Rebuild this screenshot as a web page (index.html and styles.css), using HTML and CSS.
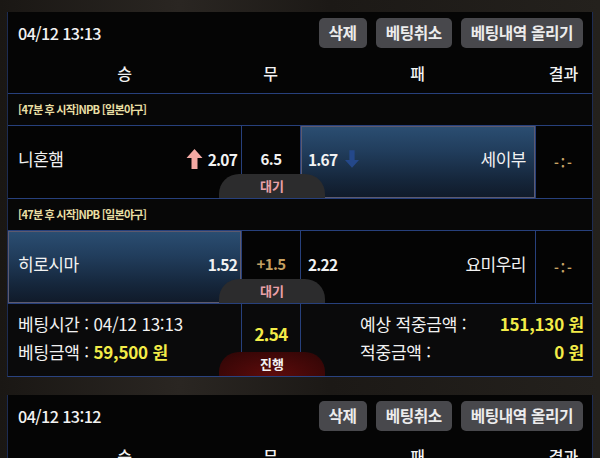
FILE: index.html
```html
<!DOCTYPE html>
<html lang="ko">
<head>
<meta charset="utf-8">
<title>베팅내역</title>
<link rel="stylesheet" href="styles.css">
</head>
<body>
<div class="page">
  <section class="slip">
    <div class="slip-top">
      <span class="date">04/12 13:13</span>
      <div class="actions">
        <button class="btn">삭제</button>
        <button class="btn">베팅취소</button>
        <button class="btn">베팅내역 올리기</button>
      </div>
    </div>
    <div class="cols"><span>승</span><span>무</span><span>패</span><span>결과</span></div>

    <div class="league">[47분 후 시작]NPB [일본야구]</div>
    <div class="match">
      <div class="cell home">
        <span class="team">니혼햄</span>
        <span class="odd"><svg class="arrow" viewBox="0 0 16 20" width="17" height="20"><polygon points="8,0 16,9 11,9 11,20 5,20 5,9 0,9" fill="#f4aaa4"/></svg>2.07</span>
      </div>
      <div class="cell draw"><span class="dval">6.5</span><span class="tab">대기</span></div>
      <div class="cell away sel">
        <span class="odd">1.67<svg class="arrow down" viewBox="0 0 16 20" width="14" height="20"><polygon points="8,20 16,11 11,11 11,0 5,0 5,11 0,11" fill="#24488a"/></svg></span>
        <span class="team">세이부</span>
      </div>
      <div class="cell result">-:-</div>
    </div>

    <div class="league">[47분 후 시작]NPB [일본야구]</div>
    <div class="match">
      <div class="cell home sel">
        <span class="team">히로시마</span>
        <span class="odd">1.52</span>
      </div>
      <div class="cell draw"><span class="dval hcap">+1.5</span><span class="tab">대기</span></div>
      <div class="cell away">
        <span class="odd">2.22</span>
        <span class="team">요미우리</span>
      </div>
      <div class="cell result">-:-</div>
    </div>

    <div class="summary">
      <div class="sum-left">
        <div>베팅시간 : 04/12 13:13</div>
        <div>베팅금액 : <span class="yellow">59,500 원</span></div>
      </div>
      <div class="sum-mid"><span class="total">2.54</span><span class="tab run">진행</span></div>
      <div class="sum-right">
        <span>예상 적중금액 :</span><span class="yellow val">151,130 원</span>
        <span>적중금액 :</span><span class="yellow val">0 원</span>
      </div>
    </div>
  </section>

  <section class="slip second">
    <div class="slip-top">
      <span class="date">04/12 13:12</span>
      <div class="actions">
        <button class="btn">삭제</button>
        <button class="btn">베팅취소</button>
        <button class="btn">베팅내역 올리기</button>
      </div>
    </div>
    <div class="cols"><span>승</span><span>무</span><span>패</span><span>결과</span></div>
  </section>
</div>
</body>
</html>
```
FILE: styles.css
```css
html, body {
  margin: 0;
  padding: 0;
}
body {
  width: 600px;
  height: 458px;
  overflow: hidden;
  background: linear-gradient(90deg, #1a1714 0%, #2a2622 30%, #1c1916 55%, #24211d 100%);
  font-family: "Noto Sans CJK KR", "Noto Sans", sans-serif;
  color: #f2f2f2;
}
.page {
  padding-top: 12px;
}
.slip {
  margin-left: 7px;
  width: 584px;
  background: #050505;
  border-left: 1px solid #1d2c52;
  border-right: 1px solid #1d2c52;
  border-bottom: 1px solid #2a4380;
}
.slip.second {
  margin-top: 18px;
  border-bottom: none;
  height: 80px;
}
.slip-top {
  display: flex;
  justify-content: space-between;
  align-items: flex-start;
  height: 43px;
  padding: 6px 9px 0 10px;
  box-sizing: border-box;
}
.date {
  font-size: 16.2px;
  font-weight: 500;
  letter-spacing: -0.6px;
  line-height: 1;
  margin-top: 7px;
}
.actions {
  display: flex;
  gap: 9px;
}
.btn {
  font-family: inherit;
  font-size: 15.7px;
  font-weight: 700;
  letter-spacing: -0.4px;
  color: #ececec;
  background: #48484c;
  border: none;
  border-radius: 5px;
  height: 30px;
  padding: 0 10px;
  line-height: 30px;
}
.cols {
  display: grid;
  grid-template-columns: 233px 59px 235px 1fr;
  height: 38px;
  align-items: center;
  font-size: 16px;
  font-weight: 500;
  text-align: center;
  padding-bottom: 2px;
  box-sizing: border-box;
}
.league {
  height: 31px;
  border-top: 1px solid #27407c;
  padding-left: 10px;
  font-size: 11.1px;
  font-weight: 700;
  letter-spacing: -0.8px;
  color: #e9dfa4;
  line-height: 30px;
  background: #070707;
}
.match {
  display: grid;
  grid-template-columns: 233px 58px 234px 1fr;
  column-gap: 1px;
  height: 73px;
  background: #27407c;
  border-top: 1px solid #27407c;
  box-sizing: border-box;
}
.cell {
  background: #040404;
  display: flex;
  align-items: center;
  padding-bottom: 7px;
  box-sizing: border-box;
}
.cell.sel {
  background: linear-gradient(180deg, #2b4e72 0%, #213d5c 35%, #15263b 75%, #101a29 100%);
  box-shadow: inset 0 0 0 1px #5d5a6e;
}
.home {
  justify-content: space-between;
  padding-left: 10px;
  padding-right: 4px;
}
.away {
  justify-content: space-between;
  padding-left: 7px;
  padding-right: 9px;
}
.team {
  font-size: 17px;
  letter-spacing: -0.5px;
}
.odd {
  display: flex;
  align-items: center;
  font-size: 15.5px;
  font-weight: 700;
  letter-spacing: -0.8px;
}
.arrow {
  margin-right: 5px;
}
.arrow.down {
  margin-left: 8px;
  margin-right: 0;
}
.draw {
  position: relative;
  justify-content: center;
}
.dval {
  font-size: 15px;
  font-weight: 700;
  letter-spacing: -0.6px;
}
.dval.hcap {
  color: #c5a062;
}
.tab {
  position: absolute;
  left: -23px;
  bottom: 0;
  width: 106px;
  height: 24px;
  border-radius: 20px 20px 0 0;
  background: #2c2c2d;
  color: #eaa1a8;
  font-size: 13px;
  font-weight: 700;
  text-align: center;
  line-height: 24px;
}
.result {
  justify-content: center;
  color: #c9a466;
  font-size: 13px;
  font-weight: 700;
  letter-spacing: 2px;
  padding-bottom: 0;
}
.summary {
  display: grid;
  grid-template-columns: 233px 58px 1fr;
  column-gap: 1px;
  height: 73px;
  background: #27407c;
  border-top: 1px solid #27407c;
  box-sizing: border-box;
}
.summary > div {
  background: #0a0a0b;
}
.sum-left {
  padding: 6px 0 0 10px;
  font-size: 17px;
  line-height: 28px;
  letter-spacing: -0.2px;
}
.yellow {
  color: #f3ec48;
  font-weight: 700;
}
.sum-mid {
  position: relative;
  display: flex;
  justify-content: center;
  padding-top: 17px;
  box-sizing: border-box;
}
.total {
  font-size: 17px;
  font-weight: 700;
  color: #f3ec48;
  letter-spacing: -0.6px;
}
.tab.run {
  background: radial-gradient(ellipse at 50% 100%, #5e0c0c 0%, #3c0707 70%, #2a0606 100%);
  color: #f2f2f2;
}
.sum-right {
  display: grid;
  grid-template-columns: 1fr auto;
  align-content: start;
  padding: 6px 8px 0 59px;
  font-size: 17px;
  line-height: 28px;
  letter-spacing: -0.2px;
}
.val {
  text-align: right;
}
```
